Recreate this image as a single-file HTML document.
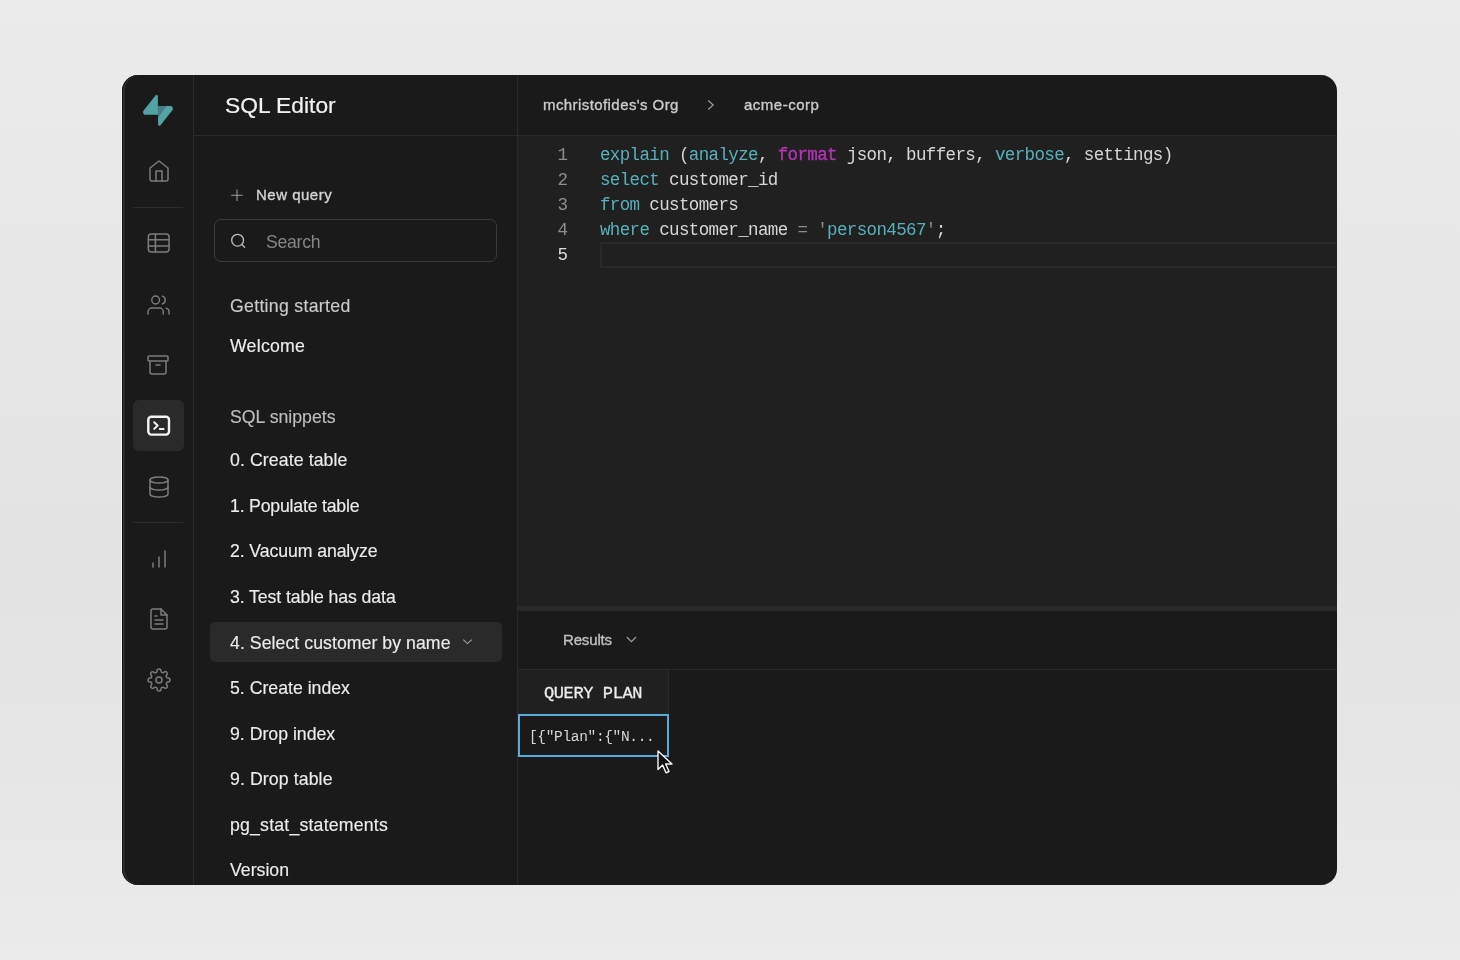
<!DOCTYPE html>
<html><head><meta charset="utf-8">
<style>
*{box-sizing:border-box;margin:0;padding:0}
html,body{width:1460px;height:960px;overflow:hidden}
body{background:linear-gradient(180deg,#ebebeb 0%,#e7e7e7 30%,#e3e3e3 58%,#e6e6e6 80%,#ebebeb 100%);position:relative;font-family:"Liberation Sans",sans-serif}
.a{position:absolute}
#win{position:absolute;left:122px;top:75px;width:1215px;height:810px;border-radius:16px;background:#1a1a1a;overflow:hidden;box-shadow:inset 1px 0 0 #141414,inset 2.5px 0 0 #30333a,-1px 0 0 #f4f4f4}
.med{-webkit-text-stroke:0.35px currentColor}
.t{position:absolute;white-space:nowrap;line-height:1;will-change:transform}
.side{left:230px;font-size:17.7px;color:#ececec;-webkit-text-stroke:0.15px currentColor}
.code{position:absolute;will-change:transform;left:600px;font-family:"Liberation Mono",monospace;font-size:17.5px;letter-spacing:-0.63px;color:#d6d6d6;white-space:pre;line-height:1}
.kw{color:#56b1bb}
.pk{color:#b933b9;-webkit-text-stroke:0.3px #b933b9}
.op{color:#8c8c8c}
.ln{position:absolute;will-change:transform;width:40px;left:528px;text-align:right;font-family:"Liberation Mono",monospace;font-size:17.5px;color:#8e8e8e;line-height:1}
svg{position:absolute;overflow:visible}
.ic{fill:none;stroke:#7c7c7c;stroke-width:1.5;stroke-linecap:round;stroke-linejoin:round}
</style></head>
<body>
<div id="win"></div>
<!-- borders -->
<div class="a" style="left:193px;top:75px;width:1px;height:810px;background:#2a2a2a"></div>
<div class="a" style="left:517px;top:75px;width:1px;height:810px;background:#2a2a2a"></div>
<div class="a" style="left:194px;top:135px;width:1143px;height:1px;background:#2a2a2a"></div>
<!-- editor bg -->
<div class="a" style="left:518px;top:136px;width:819px;height:470px;background:#202020"></div>
<div class="a" style="left:600px;top:242px;width:737px;height:25.5px;border:2px solid #282828;border-right:none"></div>
<div class="a" style="left:518px;top:606px;width:819px;height:5px;background:#2a2a2a"></div>
<div class="a" style="left:518px;top:669px;width:819px;height:1px;background:#2a2a2a"></div>

<!-- logo -->
<svg style="left:143px;top:95px" width="30" height="31" viewBox="0 0 109 113">
  <path d="M63.7076 110.284C60.8481 113.885 55.0502 111.912 54.9813 107.314L53.9738 40.0627L99.1935 40.0627C107.384 40.0627 111.952 49.5228 106.859 55.9374L63.7076 110.284Z" fill="#52a2a6"/>
  <path d="M45.317 2.07103C48.1765 -1.53037 53.9745 0.442937 54.0434 5.04075L54.4849 72.2922H9.83113C1.64038 72.2922 -2.92775 62.8321 2.1655 56.4175L45.317 2.07103Z" fill="#52a2a6"/>
  <path d="M54.1 40.06 L54.6 84 L86 40.06Z" fill="#437f88"/>
</svg>

<!-- rail icons -->
<!-- home -->
<svg class="ic" style="left:147px;top:159.4px" width="24" height="24" viewBox="0 0 24 24"><path d="M3 9l9-7 9 7v11a2 2 0 0 1-2 2H5a2 2 0 0 1-2-2z"/><polyline points="9 22 9 12 15 12 15 22"/></svg>
<div class="a" style="left:133px;top:206.5px;width:50px;height:1px;background:#2c2c2c"></div>
<!-- table -->
<svg class="ic" style="left:0;top:0" width="1460" height="960" viewBox="0 0 1460 960"><rect x="148.35" y="233.95" width="20.7" height="18.1" rx="3"/><path d="M155.4 234v18M148.4 239.7h20.6M148.4 246h20.6"/></svg>
<!-- users -->
<svg class="ic" style="left:147px;top:292.8px" width="23" height="24" viewBox="0 0 24 24" preserveAspectRatio="none"><path d="M17 21v-2a4 4 0 0 0-4-4H5a4 4 0 0 0-4 4v2"/><circle cx="9" cy="7" r="4"/><path d="M23 21v-2a4 4 0 0 0-3-3.87"/><path d="M16 3.13a4 4 0 0 1 0 7.75"/></svg>
<!-- archive -->
<svg class="ic" style="left:146px;top:353.2px" width="24" height="24" viewBox="0 0 24 24"><rect width="20" height="5" x="2" y="3" rx="1"/><path d="M4 8v11a2 2 0 0 0 2 2h12a2 2 0 0 0 2-2V8"/><path d="M10 12h4"/></svg>
<!-- terminal active -->
<div class="a" style="left:133px;top:400px;width:51px;height:51px;border-radius:6px;background:#2a2a2a"></div>
<svg style="left:0;top:0" width="1460" height="960" viewBox="0 0 1460 960" fill="none" stroke="#f4f4f4" stroke-linecap="round" stroke-linejoin="round"><rect x="148.3" y="416.8" width="20.7" height="17.8" rx="3" stroke-width="2.4"/><path d="M154.2 422.2l3.4 3.3-3.4 3.4M159.8 429h3.8" stroke-width="2"/></svg>
<!-- database -->
<svg class="ic" style="left:147px;top:474.6px" width="24" height="24" viewBox="0 0 24 24"><ellipse cx="12" cy="5" rx="9" ry="3"/><path d="M3 5v14a9 3 0 0 0 18 0V5"/><path d="M3 12a9 3 0 0 0 18 0"/></svg>
<div class="a" style="left:133px;top:522px;width:50px;height:1px;background:#2c2c2c"></div>
<!-- chart -->
<svg class="ic" style="left:146.5px;top:546.8px" width="24" height="24" viewBox="0 0 24 24"><path d="M12 20V10M18 20V4M6 20v-4"/></svg>
<!-- doc -->
<svg class="ic" style="left:146.9px;top:607.2px" width="24" height="24" viewBox="0 0 24 24"><path d="M14 2H6a2 2 0 0 0-2 2v16a2 2 0 0 0 2 2h12a2 2 0 0 0 2-2V8z"/><polyline points="14 2 14 8 20 8"/><path d="M16 13H8M16 17H8M10 9H8"/></svg>
<!-- gear -->
<svg class="ic" style="left:146.85px;top:668.25px" width="24" height="24" viewBox="0 0 24 24"><circle cx="12" cy="12" r="3"/><path d="M19.4 15a1.65 1.65 0 0 0 .33 1.82l.06.06a2 2 0 0 1 0 2.83 2 2 0 0 1-2.83 0l-.06-.06a1.65 1.65 0 0 0-1.82-.33 1.65 1.65 0 0 0-1 1.51V21a2 2 0 0 1-2 2 2 2 0 0 1-2-2v-.09A1.65 1.65 0 0 0 9 19.4a1.65 1.65 0 0 0-1.82.33l-.06.06a2 2 0 0 1-2.83 0 2 2 0 0 1 0-2.83l.06-.06a1.65 1.65 0 0 0 .33-1.82 1.65 1.65 0 0 0-1.51-1H3a2 2 0 0 1-2-2 2 2 0 0 1 2-2h.09A1.65 1.65 0 0 0 4.6 9a1.65 1.65 0 0 0-.33-1.82l-.06-.06a2 2 0 0 1 0-2.83 2 2 0 0 1 2.83 0l.06.06a1.65 1.65 0 0 0 1.82.33H9a1.65 1.65 0 0 0 1-1.51V3a2 2 0 0 1 2-2 2 2 0 0 1 2 2v.09a1.65 1.65 0 0 0 1 1.51 1.65 1.65 0 0 0 1.82-.33l.06-.06a2 2 0 0 1 2.83 0 2 2 0 0 1 0 2.83l-.06.06a1.65 1.65 0 0 0-.33 1.82V9a1.65 1.65 0 0 0 1.51 1H21a2 2 0 0 1 2 2 2 2 0 0 1-2 2h-.09a1.65 1.65 0 0 0-1.51 1z"/></svg>

<!-- sidebar -->
<div class="t" style="left:225px;top:94px;font-size:22.8px;color:#f2f2f2;letter-spacing:0px;-webkit-text-stroke:0.2px #f2f2f2">SQL Editor</div>
<svg style="left:0;top:0" width="1460" height="960" viewBox="0 0 1460 960" fill="none" stroke="#9a9a9a" stroke-width="1.1"><path d="M237 189.5v11.5M231.2 195.2h11.5"/></svg>
<div class="t med" style="left:255.8px;top:187px;font-size:15px;color:#d4d4d4;letter-spacing:0.5px">New query</div>
<div class="a" style="left:214px;top:219px;width:283px;height:43px;border:1.6px solid #383b40;border-radius:7px"></div>
<svg style="left:0;top:0" width="1460" height="960" viewBox="0 0 1460 960" fill="none" stroke="#bdbdbd" stroke-width="1.3" stroke-linecap="round"><circle cx="237.6" cy="240.2" r="5.9"/><path d="M241.9 244.5l2.7 2.7"/></svg>
<div class="t" style="left:266px;top:233.5px;font-size:17.7px;color:#858585;letter-spacing:-0.3px">Search</div>
<div class="t side" style="top:298px;color:#cbcbcb;letter-spacing:0.3px">Getting started</div>
<div class="t side" style="top:338px;letter-spacing:0.25px">Welcome</div>
<div class="t side" style="top:409px;color:#bdbdbd">SQL snippets</div>
<div class="t side" style="top:451.5px;letter-spacing:0.1px">0. Create table</div>
<div class="t side" style="top:497.5px;letter-spacing:-0.2px">1. Populate table</div>
<div class="t side" style="top:543px;letter-spacing:-0.1px">2. Vacuum analyze</div>
<div class="t side" style="top:589px;letter-spacing:-0.1px">3. Test table has data</div>
<div class="a" style="left:210px;top:622px;width:292px;height:39.5px;background:#2a2a2a;border-radius:5px"></div>
<div class="t side" style="top:634.5px;letter-spacing:0.05px">4. Select customer by name</div>
<svg style="left:0;top:0" width="1460" height="960" viewBox="0 0 1460 960" fill="none" stroke="#a0a0a0" stroke-width="1.1"><path d="M463.2 639.6l4.3 4 4.3-4"/></svg>
<div class="t side" style="top:680px">5. Create index</div>
<div class="t side" style="top:725.5px">9. Drop index</div>
<div class="t side" style="top:771px;letter-spacing:0.1px">9. Drop table</div>
<div class="t side" style="top:816.5px;letter-spacing:0.2px">pg_stat_statements</div>
<div class="t side" style="top:862px">Version</div>

<!-- header -->
<div class="t med" style="left:542.5px;top:96.7px;font-size:15px;color:#cacaca;letter-spacing:0.42px">mchristofides's Org</div>
<svg style="left:0;top:0" width="1460" height="960" viewBox="0 0 1460 960" fill="none" stroke="#a0a0a0" stroke-width="1.1"><path d="M708.2 100.5l5 4.5-5 4.5"/></svg>
<div class="t med" style="left:743.5px;top:96.7px;font-size:15px;color:#cacaca;letter-spacing:0.5px">acme-corp</div>

<!-- code -->
<div class="ln" style="top:146.5px">1</div>
<div class="ln" style="top:171.7px">2</div>
<div class="ln" style="top:196.9px">3</div>
<div class="ln" style="top:222.1px">4</div>
<div class="ln" style="top:247.3px;color:#dcdcdc">5</div>
<div class="code" style="top:146.5px"><span class="kw">explain</span> (<span class="kw">analyze</span>, <span class="pk">format</span> json, buffers, <span class="kw">verbose</span>, settings)</div>
<div class="code" style="top:171.7px"><span class="kw">select</span> customer_id</div>
<div class="code" style="top:196.9px"><span class="kw">from</span> customers</div>
<div class="code" style="top:222.1px"><span class="kw">where</span> customer_name <span class="op">=</span> <span class="op">'</span><span class="kw">person4567</span><span class="op">'</span>;</div>

<!-- results -->
<div class="t med" style="left:563px;top:632px;font-size:15px;color:#c0c0c0;letter-spacing:-0.15px">Results</div>
<svg style="left:0;top:0" width="1460" height="960" viewBox="0 0 1460 960" fill="none" stroke="#a0a0a0" stroke-width="1.1"><path d="M626.8 637l4.6 4.6 4.6-4.6"/></svg>
<div class="a" style="left:518px;top:670px;width:151px;height:44px;background:#202020;border-right:1px solid #2a2a2a"></div>
<div class="t" style="left:544px;top:684.5px;font-family:'Liberation Mono',monospace;font-size:17px;letter-spacing:-0.39px;color:#ececec;-webkit-text-stroke:0.3px #ececec">QUERY PLAN</div>
<div class="a" style="left:517.5px;top:714px;width:151px;height:43px;border:2.5px solid #5aabdc"></div>
<div class="t" style="left:528.5px;top:730px;font-family:'Liberation Mono',monospace;font-size:14.5px;letter-spacing:-0.34px;color:#d8d8d8">[{"Plan":{"N...</div>
<!-- cursor -->
<svg style="left:657px;top:750px" width="17" height="25" viewBox="0 0 17 25"><path d="M1 1v18.5l4.6-4.4 3.4 7.7 3-1.3-3.3-7.5h6.3z" fill="#111" stroke="#f5f5f5" stroke-width="1.4" stroke-linejoin="round"/></svg>
</body></html>
